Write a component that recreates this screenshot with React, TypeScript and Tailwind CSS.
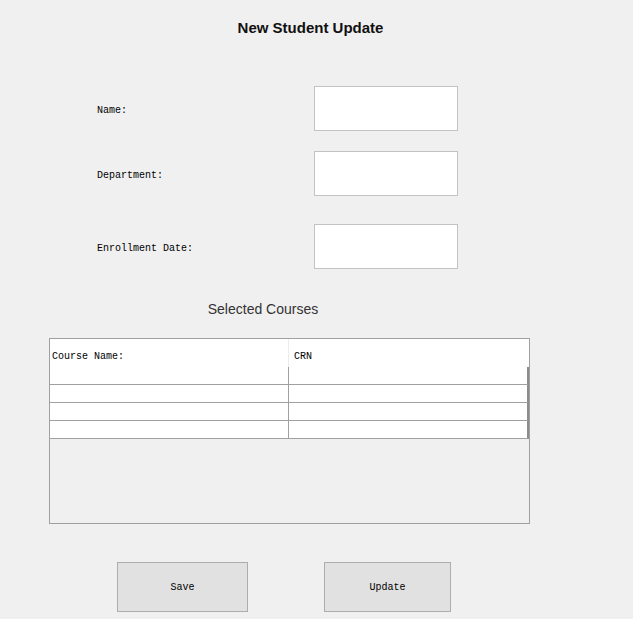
import React from 'react'

const mono = { fontFamily: '"Liberation Mono", "DejaVu Sans Mono", monospace' }

const fields = [
  { label: 'Name:', mt: 'mt-[49px]' },
  { label: 'Department:', mt: 'mt-[20px]' },
  { label: 'Enrollment Date:', mt: 'mt-[28px]' },
]

const App = () => {
  return (
    <div className="min-h-screen w-[633px] h-[619px] bg-[#f0f0f0] text-black overflow-hidden font-['Liberation_Sans',Arial,sans-serif]">
      <div className="flex flex-col">
        {/* Title */}
        <h1 className="pt-[19px] pr-[12px] text-center text-[15px] leading-[18px] font-bold text-[#111]">
          New Student Update
        </h1>

        {/* Form */}
        {fields.map((f) => (
          <div key={f.label} className={`${f.mt} flex items-center`}>
            <label className="ml-[97px] w-[217px] pt-[4px] text-[10px] leading-[12px] text-black" style={mono}>
              {f.label}
            </label>
            <input
              type="text"
              className="w-[144px] h-[45px] bg-white border border-[#c3c3c3] outline-none"
            />
          </div>
        ))}

        {/* Courses */}
        <h2 className="mt-[32px] pr-[107px] text-center text-[14px] leading-[16px] text-[#333]">
          Selected Courses
        </h2>

        <div className="mt-[21px] ml-[49px] w-[481px] h-[186px] border border-[#a0a0a0] bg-[#f0f0f0] flex flex-col">
          <div className="flex h-[28px] bg-white text-[10px]" style={mono}>
            <div className="w-[239px] border-r border-[#ececec] flex items-center pt-[6px] pl-[2px]">
              Course Name:
            </div>
            <div className="flex-1 flex items-center pt-[6px] pl-[5px]">CRN</div>
          </div>
          {[0, 1, 2, 3].map((r) => (
            <div
              key={r}
              className="flex h-[18px] w-[479px] bg-white border-b border-[#a0a0a0] border-r-2 border-r-[#8c8c8c]"
            >
              <div className="w-[239px] border-r border-[#a0a0a0]" />
              <div className="flex-1" />
            </div>
          ))}
        </div>

        {/* Buttons */}
        <div className="mt-[38px] flex items-start">
          <button
            type="button"
            className="ml-[117px] w-[131px] h-[50px] bg-[#e1e1e1] border border-[#adadad] text-[10px]"
            style={mono}
          >
            Save
          </button>
          <button
            type="button"
            className="ml-[76px] w-[127px] h-[50px] bg-[#e1e1e1] border border-[#adadad] text-[10px]"
            style={mono}
          >
            Update
          </button>
        </div>
      </div>
    </div>
  )
}

export default App
